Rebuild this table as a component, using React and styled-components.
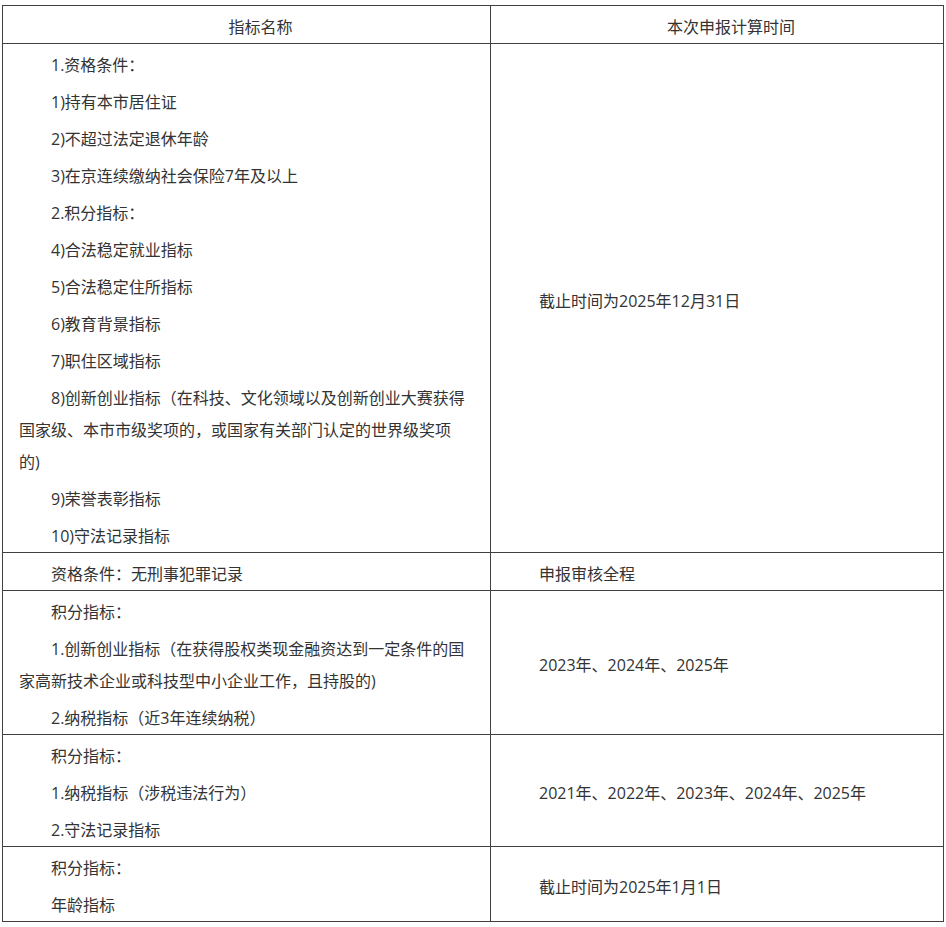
import React from "react";
import styled, { createGlobalStyle } from "styled-components";

const GlobalStyle = createGlobalStyle`
  html, body {
    margin: 0;
    padding: 0;
    background: #fff;
  }
  body {
    font-family: "Open Sans", "Noto Sans CJK SC", sans-serif;
    color: #333;
  }
`;

const Page = styled.div`
  padding: 5px 0 0 2px;
`;

const Table = styled.table`
  width: 941px;
  border-collapse: collapse;
  table-layout: fixed;
  border: 1px solid #404040;
  font-size: 16px;
  color: #333;
`;

const Cell = styled.td`
  border: 1px solid #404040;
  padding: 0 20px 0 16px;
  vertical-align: middle;
  text-align: ${(p) => (p.$center ? "center" : "left")};
`;

const Para = styled.p`
  margin: 5px 0 0;
  line-height: 32px;
  text-indent: 2em;
`;

const rows = [
  {
    left: [
      "1.资格条件：",
      "1)持有本市居住证",
      "2)不超过法定退休年龄",
      "3)在京连续缴纳社会保险7年及以上",
      "2.积分指标：",
      "4)合法稳定就业指标",
      "5)合法稳定住所指标",
      "6)教育背景指标",
      "7)职住区域指标",
      "8)创新创业指标（在科技、文化领域以及创新创业大赛获得国家级、本市市级奖项的，或国家有关部门认定的世界级奖项的)",
      "9)荣誉表彰指标",
      "10)守法记录指标",
    ],
    right: "截止时间为2025年12月31日",
  },
  { left: ["资格条件：无刑事犯罪记录"], right: "申报审核全程" },
  {
    left: [
      "积分指标：",
      "1.创新创业指标（在获得股权类现金融资达到一定条件的国家高新技术企业或科技型中小企业工作，且持股的)",
      "2.纳税指标（近3年连续纳税）",
    ],
    right: "2023年、2024年、2025年",
  },
  {
    left: ["积分指标：", "1.纳税指标（涉税违法行为）", "2.守法记录指标"],
    right: "2021年、2022年、2023年、2024年、2025年",
  },
  { left: ["积分指标：", "年龄指标"], right: "截止时间为2025年1月1日" },
];

export default function App() {
  return (
    <Page>
      <GlobalStyle />
      <Table>
        <colgroup>
          <col style={{ width: "488px" }} />
          <col style={{ width: "453px" }} />
        </colgroup>
        <tbody>
          <tr>
            <Cell $center>
              <Para>指标名称</Para>
            </Cell>
            <Cell $center>
              <Para>本次申报计算时间</Para>
            </Cell>
          </tr>
          {rows.map((row, i) => (
            <tr key={i}>
              <Cell>
                {row.left.map((t, j) => (
                  <Para key={j}>{t}</Para>
                ))}
              </Cell>
              <Cell>
                <Para>{row.right}</Para>
              </Cell>
            </tr>
          ))}
        </tbody>
      </Table>
    </Page>
  );
}
